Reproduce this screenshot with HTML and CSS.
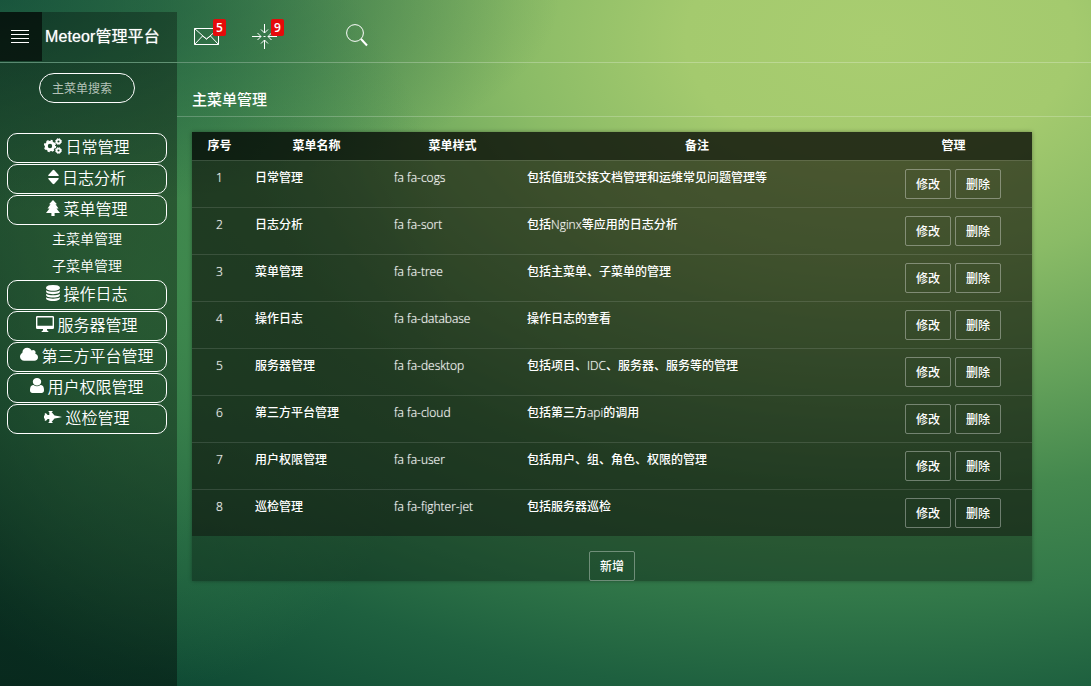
FILE: index.html
```
<!DOCTYPE html>
<html lang="zh-CN">
<head>
<meta charset="utf-8">
<title>Meteor管理平台</title>
<link rel="stylesheet" href="styles.css">
</head>
<body>
<header class="topbar">
  <div class="brand">
    <div class="burger"><i></i><i></i><i></i><i></i></div>
    <div class="logo">Meteor管理平台</div>
  </div>
  <nav class="tools">
    <a class="tool"><svg width="26" height="18" viewBox="0 0 26 18"><path d="M.5.5h24v16H.5zM.5.5l8.500 7.500 3.500 3 3.500-3L24.500.5M.5 16.500L8.500 8l4 3 4-3 8 8.500"/></svg><b class="badge">5</b></a>
    <a class="tool tool-alert"><svg width="26" height="26" viewBox="0 0 26 26"><path d="M12.500 0v9M9 5.500L12.500 9 16 5.500M12.500 25v-9M9 19.500l3.500-3.500 3.500 3.500M0 12.500h9M5.500 9L9 12.500 5.500 16M25 12.500h-9M19.500 9L16 12.500l3.500 3.500M11.500 12.500h2"/></svg><b class="badge">9</b></a>
    <a class="tool tool-search"><svg width="23" height="23" viewBox="0 0 23 23"><circle cx="9" cy="9" r="8.400"/><path d="M15 15l6 6.500" stroke-width="2"/></svg></a>
  </nav>
</header>
<div class="layout">
  <aside class="sidebar">
    <input class="search" type="text" placeholder="主菜单搜索">
    <ul class="menu">
      <li class="item"><svg class="ic" width="18" height="16" viewBox="0 0 18 16"><g class="ring"><circle cx="6" cy="8" r="3.700" stroke-width="3"/><circle cx="6" cy="8" r="5.400" stroke-width="1.600" stroke-dasharray="2.200 2.040"/><circle cx="14.500" cy="3.500" r="1.900" stroke-width="1.700"/><circle cx="14.500" cy="3.500" r="2.900" stroke-width="1" stroke-dasharray="1.400 0.877"/><circle cx="14.500" cy="12.500" r="1.900" stroke-width="1.700"/><circle cx="14.500" cy="12.500" r="2.900" stroke-width="1" stroke-dasharray="1.400 0.877"/></g></svg>日常管理</li>
      <li class="item"><svg class="ic" width="11" height="16" viewBox="0 0 10 16" preserveAspectRatio="none"><path d="M5 .8q.4 0 .8.400l3.900 4.700q.6 1.100-.6 1.100H.9Q-.3 7 .3 5.900l3.900-4.700q.4-.4.8-.4zM.9 9h8.200q1.200 0 .6 1.100l-3.900 4.700q-.8.800-1.600 0L.3 10.100Q-.3 9 .9 9z"/></svg>日志分析</li>
      <li class="item"><svg class="ic" width="14" height="16" viewBox="0 0 14 16"><path d="M7 0l4 4.300H9.500L12.500 8.500h-2L14 13H8.600v3H5.400v-3H0l3.500-4.500h-2L4.500 4.300H3z"/></svg>菜单管理</li>
      <li class="sub">主菜单管理</li>
      <li class="sub">子菜单管理</li>
      <li class="item"><svg class="ic" width="14" height="16" viewBox="128 0 1536 1792"><path d="M896 768q237 0 443-43t325-127v170q0 69-103 128t-280 93.500-385 34.500-385-34.500-280-93.500-103-128v-170q119 84 325 127t443 43zm0 768q237 0 443-43t325-127v170q0 69-103 128t-280 93.500-385 34.500-385-34.500-280-93.500-103-128v-170q119 84 325 127t443 43zm0-384q237 0 443-43t325-127v170q0 69-103 128t-280 93.500-385 34.500-385-34.500-280-93.500-103-128v-170q119 84 325 127t443 43zm0-1152q208 0 385 34.500t280 93.500 103 128v128q0 69-103 128t-280 93.500-385 34.500-385-34.500-280-93.500-103-128v-128q0-69 103-128t280-93.500 385-34.500z"/></svg>操作日志</li>
      <li class="item"><svg class="ic" width="18" height="16" viewBox="0 0 18 16"><path fill-rule="evenodd" d="M1.300 0h15.400Q18 0 18 1.300v10.400q0 1.300-1.300 1.300H11v1.500q1.500.3 1.500 1.500h-7q0-1.200 1.500-1.500V13H1.300Q0 13 0 11.700V1.300Q0 0 1.300 0zM1.400 1.400v8.300h15.200V1.400z"/></svg>服务器管理</li>
      <li class="item"><svg class="ic" width="18" height="16" viewBox="64 60 1920 1706"><path d="M1984 1152q0 159-112.500 271.500t-271.500 112.500h-1088q-185 0-316.500-131.500t-131.500-316.500q0-132 71-241.500t187-163.500q-2-28-2-43 0-212 150-362t362-150q158 0 286.500 88t187.500 230q70-62 166-62 106 0 181 75t75 181q0 75-41 138 129 30 213 134.500t84 239.500z"/></svg>第三方平台管理</li>
      <li class="item"><svg class="ic" width="14" height="15" viewBox="256 128 1280 1536" preserveAspectRatio="none"><path d="M1536 1399q0 109-62.500 187t-150.500 78h-854q-88 0-150.500-78t-62.500-187q0-85 8.500-160.500t31.500-152 58.500-131 94-89 134.500-34.500q131 128 313 128t313-128q76 0 134.500 34.500t94 89 58.500 131 31.500 152 8.500 160.500zm-256-887q0 159-112.500 271.500t-271.500 112.500-271.500-112.500-112.500-271.500 112.500-271.500 271.500-112.500 271.500 112.500 112.500 271.500z"/></svg>用户权限管理</li>
      <li class="item"><svg class="ic" width="18" height="16" viewBox="0 0 18 16"><path d="M18 8l-3 .8-4.500.8L7.500 13h1v.9H4.600V13h.7V9.900H3.700L2 11.700H.8V9.400H0V6.600h.8V4.300H2l1.700 1.800h1.600V3h-.7v-.9h3.900V3h-1l3 3.400 4.500.8z"/></svg>巡检管理</li>
    </ul>
  </aside>
  <main class="content">
    <h1 class="title">主菜单管理</h1>
    <div class="panel">
      <table class="grid">
        <colgroup><col class="c1"><col class="c2"><col class="c3"><col class="c4"><col class="c5"></colgroup>
        <thead><tr><th>序号</th><th>菜单名称</th><th>菜单样式</th><th>备注</th><th>管理</th></tr></thead>
        <tbody>
          <tr><td>1</td><td>日常管理</td><td>fa fa-cogs</td><td>包括值班交接文档管理和运维常见问题管理等</td><td><button class="btn">修改</button><button class="btn">删除</button></td></tr>
          <tr><td>2</td><td>日志分析</td><td>fa fa-sort</td><td>包括<span class="lt">Nginx</span>等应用的日志分析</td><td><button class="btn">修改</button><button class="btn">删除</button></td></tr>
          <tr><td>3</td><td>菜单管理</td><td>fa fa-tree</td><td>包括主菜单、子菜单的管理</td><td><button class="btn">修改</button><button class="btn">删除</button></td></tr>
          <tr><td>4</td><td>操作日志</td><td>fa fa-database</td><td>操作日志的查看</td><td><button class="btn">修改</button><button class="btn">删除</button></td></tr>
          <tr><td>5</td><td>服务器管理</td><td>fa fa-desktop</td><td>包括项目、<span class="lt">IDC</span>、服务器、服务等的管理</td><td><button class="btn">修改</button><button class="btn">删除</button></td></tr>
          <tr><td>6</td><td>第三方平台管理</td><td>fa fa-cloud</td><td>包括第三方<span class="lt">api</span>的调用</td><td><button class="btn">修改</button><button class="btn">删除</button></td></tr>
          <tr><td>7</td><td>用户权限管理</td><td>fa fa-user</td><td>包括用户、组、角色、权限的管理</td><td><button class="btn">修改</button><button class="btn">删除</button></td></tr>
          <tr><td>8</td><td>巡检管理</td><td>fa fa-fighter-jet</td><td>包括服务器巡检</td><td><button class="btn">修改</button><button class="btn">删除</button></td></tr>
        </tbody>
      </table>
      <div class="foot"><button class="btn">新增</button></div>
    </div>
  </main>
</div>
</body>
</html>
```
FILE: styles.css
```
* { box-sizing: border-box; }
body {
  margin: 0;
  height: 686px;
  padding-top: 12px;
  display: flex;
  flex-direction: column;
  overflow: hidden;
  color: #fff;
  font: 12px "Open Sans", "Noto Sans CJK SC", sans-serif;
  background:
    radial-gradient(ellipse 560px 210px at 0 0, rgba(16,72,56,.75), rgba(20,80,60,.4) 50%, rgba(20,80,60,0)),
    radial-gradient(ellipse 300px 400px at 150px 290px, rgba(64,140,78,.75), rgba(60,132,76,.5) 45%, rgba(50,120,72,0)),
    radial-gradient(ellipse 1080px 680px at 880px 40px, #a9cd70 0%, #a4ca6e 18%, #8abb66 34%, #64a15a 52%, #44884e 67%, #327849 82%, #1e603f 97%, #0f4a34 115%, #0b3f2e 135%);
}
.topbar { display: flex; flex: none; height: 51px; border-bottom: 1px solid rgba(255,255,255,.25); }
.brand { width: 177px; display: flex; background: rgba(0,0,0,.3); }
.burger { width: 42px; height: 49px; background: rgba(0,0,0,.6); padding: 18px 13px 0 11px; display: flex; flex-direction: column; gap: 3px; }
.burger i { height: 1px; background: #fff; }
.logo { padding-left: 3px; font: 400 16px/49px "Liberation Sans", "Noto Sans CJK SC", sans-serif; letter-spacing: .1px; white-space: nowrap; text-shadow: 0 0 1px rgba(255,255,255,.7); }
.tools { display: flex; padding-left: 17px; }
.tool { position: relative; width: 58px; padding-top: 16px; }
.tool-alert { width: 94px; padding-top: 12px; }
.tool-search { padding-top: 12px; }
.tool svg { display: block; fill: none; stroke: #fff; stroke-width: 1; }
.badge { position: absolute; left: 19px; top: 7px; width: 13px; height: 17px; background: #e60a0a; border-radius: 2px; font: 600 12px/17px "Open Sans", sans-serif; text-align: center; }
.layout { display: flex; flex: 1; }
.sidebar { width: 177px; background: linear-gradient(rgba(0,0,0,.35), rgba(0,0,0,.35) 60%, rgba(0,0,0,.4)); padding-top: 10px; }
.search { display: block; width: 96px; height: 30px; margin: 0 0 30px 39px; padding: 0 12px 2px; border: 1px solid #fff; border-radius: 15px; background: none; color: #fff; font: 12px "Noto Sans CJK SC", sans-serif; }
.search::placeholder { color: #b4c2b8; }
.menu { list-style: none; margin: 0; padding: 0 10px 0 7px; }
.item { height: 30px; margin-bottom: 1px; border: 1px solid #fff; border-radius: 10px; display: flex; justify-content: center; font: 350 16px/24px "Noto Sans CJK SC", sans-serif; gap: 3px; }
.ic { display: block; margin-top: 4px; fill: #fff; }
.ring { fill: none; stroke: #fff; }
.sub { height: 27px; text-align: center; font: 350 14px/25px "Noto Sans CJK SC", sans-serif; }
.sub + .item { margin-top: 0; }
.content { flex: 1; }
.title { margin: 0; height: 54px; padding: 21px 15px 0; font: 500 15px/30px "Noto Sans CJK SC", sans-serif; border-bottom: 1px solid rgba(255,255,255,.22); }
.panel { width: 840px; margin: 15px 0 0 15px; background: rgba(0,0,0,.32); box-shadow: 0 0 4px rgba(0,0,0,.35); }
.grid { width: 840px; table-layout: fixed; border-collapse: separate; border-spacing: 0; }
.c1 { width: 55px; } .c2 { width: 139px; } .c3 { width: 133px; } .c4 { width: 356px; } .c5 { width: 157px; }
th { height: 28px; padding: 0; background: rgba(0,0,0,.64); font: 700 12px/26px "Noto Sans CJK SC", sans-serif; vertical-align: top; }
td { height: 47px; vertical-align: top; padding: 7px 8px 0; background: rgba(14,6,4,.38); border-top: 1px solid rgba(255,255,255,.12); font: 500 12px/18px "Noto Sans CJK SC", sans-serif; }
td:first-child { padding-top: 8px; text-align: center; font: 300 12px/18px "Open Sans", sans-serif; text-shadow: 0 0 1px rgba(255,255,255,.6); }
td:nth-child(3) { padding-top: 8px; font: 300 12px/18px "Open Sans", sans-serif; text-shadow: 0 0 1px rgba(255,255,255,.6); }
td:last-child { padding: 8px 0 0 30px; font-size: 0; }
.lt { font-family: "Open Sans", sans-serif; font-weight: 300; text-shadow: 0 0 1px rgba(255,255,255,.6); }
.btn { width: 46px; height: 30px; margin-right: 4px; padding: 0 0 2px; border: 1px solid rgba(255,255,255,.35); border-radius: 2px; background: none; color: #fff; font: 500 12px "Noto Sans CJK SC", sans-serif; vertical-align: top; }
.foot { height: 45px; padding-top: 15px; text-align: center; }
.foot .btn { margin: 0; }
```
